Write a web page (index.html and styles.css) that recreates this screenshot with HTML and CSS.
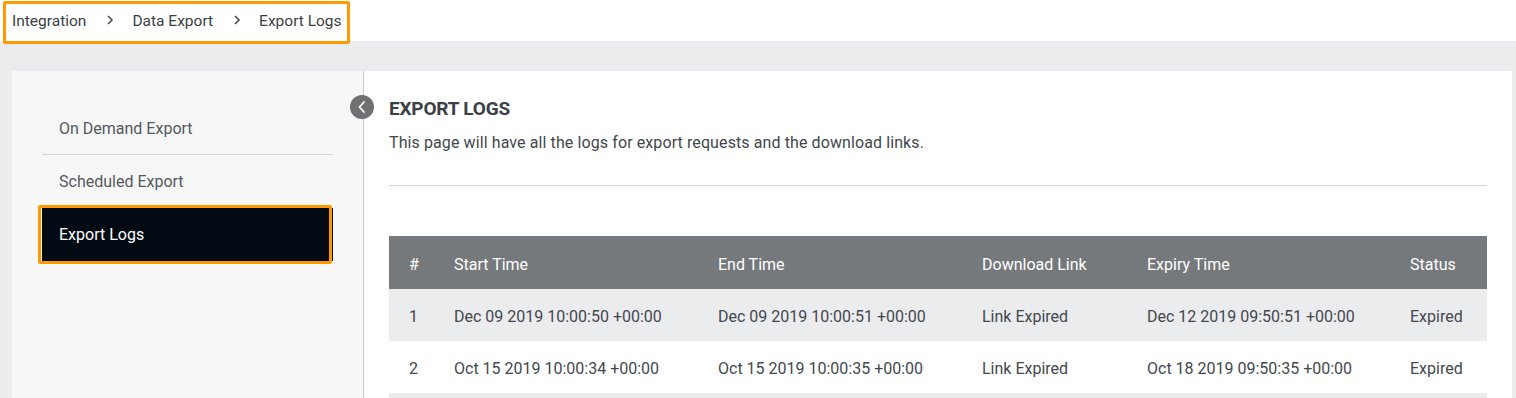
FILE: index.html
```html
<!DOCTYPE html>
<html>
<head>
<meta charset="utf-8">
<link rel="stylesheet" href="styles.css">
</head>
<body>
<header class="topbar">
  <nav class="crumbs">
    <span class="crumb">Integration</span>
    <svg class="sep" width="10" height="12" viewBox="0 0 10 12"><path d="M3 2 L7 6 L3 10" fill="none" stroke="#444" stroke-width="1.5"/></svg>
    <span class="crumb">Data Export</span>
    <svg class="sep" width="10" height="12" viewBox="0 0 10 12"><path d="M3 2 L7 6 L3 10" fill="none" stroke="#444" stroke-width="1.5"/></svg>
    <span class="crumb">Export Logs</span>
    <span class="hl"></span>
  </nav>
</header>
<main class="main">
  <div class="card">
    <aside class="side">
      <a class="item">On Demand Export</a>
      <a class="item">Scheduled Export</a>
      <a class="item active">Export Logs</a>
    </aside>
    <section class="content">
      <span class="toggle"><svg width="24" height="24" viewBox="0 0 24 24"><circle cx="12" cy="12" r="12" fill="#707173"/><path d="M14 7 L9.5 12 L14 17" fill="none" stroke="#fff" stroke-width="1.8" stroke-linecap="round" stroke-linejoin="round"/></svg></span>
      <h1 class="title">EXPORT LOGS</h1>
      <p class="desc">This page will have all the logs for export requests and the download links.</p>
      <hr class="rule">
      <table class="logs">
        <colgroup>
          <col class="c1"><col class="c2"><col class="c3"><col class="c4"><col class="c5"><col class="c6">
        </colgroup>
        <thead>
          <tr><th>#</th><th>Start Time</th><th>End Time</th><th>Download Link</th><th>Expiry Time</th><th>Status</th></tr>
        </thead>
        <tbody>
          <tr><td>1</td><td>Dec 09 2019 10:00:50 +00:00</td><td>Dec 09 2019 10:00:51 +00:00</td><td>Link Expired</td><td>Dec 12 2019 09:50:51 +00:00</td><td>Expired</td></tr>
          <tr><td>2</td><td>Oct 15 2019 10:00:34 +00:00</td><td>Oct 15 2019 10:00:35 +00:00</td><td>Link Expired</td><td>Oct 18 2019 09:50:35 +00:00</td><td>Expired</td></tr>
          <tr class="blank"><td colspan="6"></td></tr>
        </tbody>
      </table>
    </section>
  </div>
</main>
</body>
</html>
```

FILE: styles.css
```css
* { box-sizing: border-box; }
html, body { margin: 0; padding: 0; }
body {
  font-family: Roboto, "Liberation Sans", sans-serif;
  color: #43484e;
  background: #ebecee;
  width: 1516px;
  height: 398px;
  overflow: hidden;
}
.topbar {
  height: 41px;
  background: #fff;
  display: flex;
  align-items: center;
  padding-left: 12px;
}
.crumbs {
  position: relative;
  display: flex;
  align-items: center;
  font-size: 15.5px;
  color: #3a3f44;
  height: 41px;
}
.sep { margin: 0 17px 0 19px; position: relative; top: -1px; }
.hl {
  position: absolute;
  left: -9px;
  top: 1px;
  width: 347px;
  height: 43px;
  border: 3px solid #ff9900;
  border-radius: 2px;
}
.main {
  padding: 30px 4px 0 12px;
  height: 357px;
}
.card {
  display: flex;
  height: 100%;
}
.side {
  width: 352px;
  flex: none;
  background: #f7f7f7;
  border-right: 1px solid #c9c9c9;
  padding: 31px 30px 0 30px;
  display: flex;
  flex-direction: column;
}
.item {
  display: flex;
  align-items: center;
  height: 53px;
  padding-left: 17px;
  font-size: 16px;
  color: #55595e;
}
.item:first-child { border-bottom: 1px solid #d4d4d4; }
.item.active {
  position: relative;
  background: #020b13;
  color: #fff;
}
.item.active::after {
  content: "";
  position: absolute;
  left: -4px;
  right: 1px;
  top: -3px;
  bottom: -3px;
  border: 3px solid #ff9900;
  border-radius: 2px;
}
.content {
  position: relative;
  flex: 1;
  background: #fff;
  padding: 26px 25px 0 25px;
}
.toggle {
  position: absolute;
  left: -14px;
  top: 24px;
  width: 24px;
  height: 24px;
  display: block;
}
.toggle svg { display: block; }
.title {
  margin: 0;
  font-size: 19px;
  font-weight: 700;
  color: #3b4046;
  letter-spacing: -0.2px;
  line-height: 24px;
}
.desc {
  margin: 12px 0 0 0;
  font-size: 16px;
  letter-spacing: 0.1px;
  line-height: 20px;
  color: #42474c;
}
.rule {
  margin: 32px 0 0 0;
  border: 0;
  border-top: 1px solid #d3d3d3;
}
.logs {
  margin-top: 50px;
  width: 100%;
  border-collapse: collapse;
  table-layout: fixed;
  font-size: 16px;
}
.c1 { width: 45px; }
.c2 { width: 264px; }
.c3 { width: 264px; }
.c4 { width: 165px; }
.c5 { width: 263px; }
.c6 { width: 97px; }
.logs th {
  background: #75797c;
  color: #fff;
  font-weight: 400;
  text-align: left;
  height: 53px;
  padding: 3px 0 0 20px;
}
.logs td {
  height: 52px;
  padding: 2px 0 0 20px;
  color: #43484e;
  white-space: nowrap;
}
.logs tbody tr:nth-child(odd) td { background: #ebecee; }
```
